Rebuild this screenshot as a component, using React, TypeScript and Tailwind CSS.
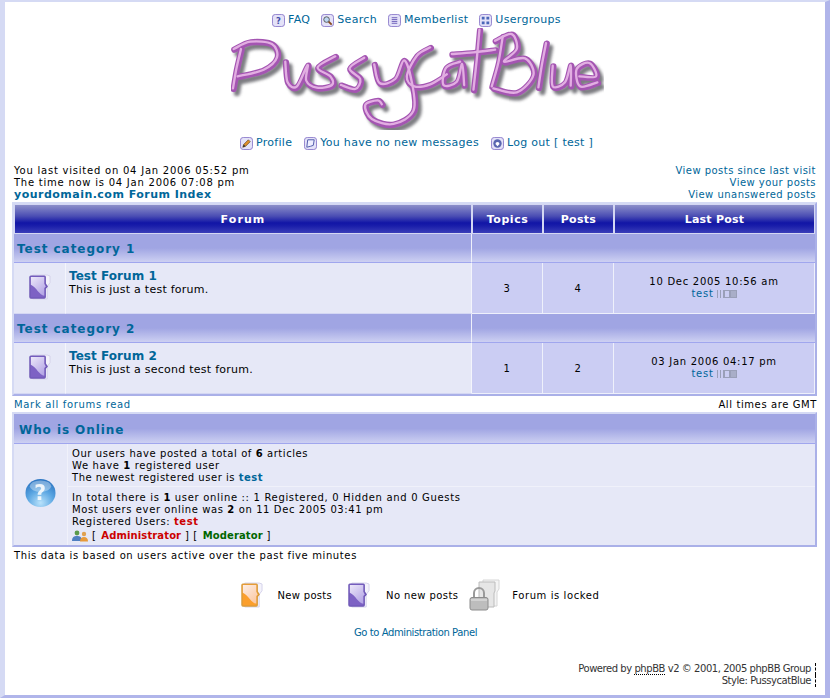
import type { ReactNode } from "react";

// smooth line through points, used for the hand written logo strokes
function smooth(pts: number[][]) {
  let d = `M${pts[0][0]} ${pts[0][1]}`;
  for (let i = 0; i < pts.length - 1; i++) {
    const p0 = pts[i - 1] || pts[i];
    const p1 = pts[i];
    const p2 = pts[i + 1];
    const p3 = pts[i + 2] || p2;
    const c1x = p1[0] + (p2[0] - p0[0]) / 6;
    const c1y = p1[1] + (p2[1] - p0[1]) / 6;
    const c2x = p2[0] - (p3[0] - p1[0]) / 6;
    const c2y = p2[1] - (p3[1] - p1[1]) / 6;
    d += ` C${c1x} ${c1y} ${c2x} ${c2y} ${p2[0]} ${p2[1]}`;
  }
  return d;
}

const logoStrokes = [
  [[48, 268], [58, 210], [72, 150]],
  [[50, 150], [100, 128], [165, 135], [180, 175], [140, 212], [62, 232]],
  [[205, 188], [212, 250], [240, 262], [272, 198], [268, 245], [300, 266], [345, 258], [340, 232], [302, 205], [355, 172]],
  [[372, 258], [415, 270], [430, 240], [398, 208], [442, 176]],
  [[472, 196], [488, 252], [535, 240], [562, 184], [585, 250], [590, 335], [530, 375], [465, 360], [445, 318], [482, 304], [495, 316]],
  [[640, 145], [600, 170], [570, 232], [592, 262], [640, 256], [690, 226]],
  [[730, 188], [688, 206], [680, 258], [720, 248], [736, 195], [742, 258]],
  [[788, 92], [780, 180], [770, 272]],
  [[705, 165], [770, 160], [835, 152]],
  [[858, 112], [845, 190], [825, 262]],
  [[835, 125], [885, 105], [900, 150], [862, 188], [925, 178], [950, 228], [900, 280], [830, 268]],
  [[988, 132], [975, 200], [965, 265]],
  [[1008, 200], [1008, 262], [1045, 250], [1062, 198], [1062, 260]],
  [[1088, 232], [1138, 232], [1118, 192], [1080, 210], [1090, 262], [1142, 250]],
].map(smooth);

function Logo() {
  return (
    <svg width="373" height="102" viewBox="40 85 1120 306" role="img" aria-label="PussycatBlue" className="block">
      <defs>
        <filter id="soft" x="-5%" y="-10%" width="110%" height="120%">
          <feGaussianBlur stdDeviation="5" />
        </filter>
        <filter id="shine" x="-5%" y="-10%" width="110%" height="120%">
          <feGaussianBlur stdDeviation="1.8" />
        </filter>
      </defs>
      <g fill="none" strokeLinecap="round" strokeLinejoin="round">
        <g stroke="#5c5c62" strokeWidth="19" transform="translate(10 12)" filter="url(#soft)" opacity="0.8">
          {logoStrokes.map((d, i) => <path key={i} d={d} />)}
        </g>
        <g stroke="#a455b2" strokeWidth="19">
          {logoStrokes.map((d, i) => <path key={i} d={d} />)}
        </g>
        <g stroke="#e2aee2" strokeWidth="7" transform="translate(-2 -2)" filter="url(#shine)">
          {logoStrokes.map((d, i) => <path key={i} d={d} />)}
        </g>
      </g>
    </svg>
  );
}

function NavIcon({ children }: { children: ReactNode }) {
  return (
    <svg width="13" height="13" viewBox="0 0 14 14" className="block shrink-0">
      <rect x="0.5" y="0.5" width="13" height="13" rx="3" fill="#e4e2f8" stroke="#8d7ccb" />
      {children}
    </svg>
  );
}

const navIcons: Record<string, ReactNode> = {
  faq: <text x="7" y="11" textAnchor="middle" fontSize="9" fontWeight="700" fill="#3f4fa8" fontFamily="DejaVu Sans">?</text>,
  search: (
    <>
      <path d="M8 8l3.5 3.5" stroke="#8a4a20" strokeWidth="2" />
      <circle cx="6" cy="6" r="3" fill="#bcd6f2" stroke="#555" />
    </>
  ),
  members: <path d="M4 4h6M4 6h6M4 8h6M4 10h6" stroke="#6a5cb8" />,
  groups: <path d="M3 3h3v3H3zM8 3h3v3H8zM3 8h3v3H3zM8 8h3v3H8z" fill="#4a66b8" />,
  profile: (
    <>
      <path d="M3 11l1-3 5-5 2 2-5 5z" fill="#e0912a" stroke="#5a3a1a" strokeWidth="0.7" />
      <path d="M3 11l1-3 2 2z" fill="#333" />
    </>
  ),
  messages: <path d="M4 3h7l-1 6-3 1-4 1z" fill="#eef" stroke="#4a55a8" />,
  logout: (
    <>
      <circle cx="7" cy="7" r="4.5" fill="#5a66b0" />
      <path d="M4.8 7.5a2.2 2.2 0 0 1 4.4 0L7 10z" fill="#fff" />
    </>
  ),
};

function NavLink({ icon, children }: { icon: string; children: ReactNode }) {
  return (
    <span className="flex items-center gap-[3px]">
      <NavIcon>{navIcons[icon]}</NavIcon>
      <span className="text-[#006699] whitespace-nowrap">{children}</span>
    </span>
  );
}

function Folder({ color = "purple", idSuffix = "a", className = "" }: { color?: string; idSuffix?: string; className?: string }) {
  const c =
    color === "orange"
      ? { edge: "#d59a3c", body: "#fb9f2c", top: "#fdeee6", bottom: "#fbc9a4" }
      : { edge: "#6d57b5", body: "#7d62c4", top: "#ece8f9", bottom: "#b5a6e6" };
  const id = `fold-${color}-${idSuffix}`;
  return (
    <svg width="23" height="27" viewBox="0 0 24 28" className={`block shrink-0 ${className}`}>
      <defs>
        <linearGradient id={id} x1="0" y1="0" x2="0.7" y2="1">
          <stop offset="0" stopColor={c.top} />
          <stop offset="1" stopColor={c.bottom} />
        </linearGradient>
      </defs>
      <path d="M5 1h15l3 1v7l-3 4v13H5z" fill="#f4f3fb" stroke="#d4d2ea" />
      <path d="M2 3q0-1 1-1h14q1 0 1 1v7l2 3-2 2v9q0 1-1 1H3q-1 0-1-1z" fill={c.body} stroke={c.edge} strokeWidth="1.3" />
      <path d="M3 3h14v7l1.500 3-1.500 1.500v8C12 22 9 14 3 11z" fill={`url(#${id})`} />
    </svg>
  );
}

function LockedFolder() {
  return (
    <svg width="32" height="32" viewBox="0 0 32 32" className="block shrink-0">
      <path d="M14 1h16v9l-2 3v14H14z" fill="#f4f4f4" stroke="#d6d6d6" />
      <path d="M10 3h16v9l-1 2v14H10z" fill="#e6e6e6" stroke="#bcbcbc" />
      <path d="M5 19v-5a5 5 0 0 1 10 0v5" fill="none" stroke="#9a9a9a" strokeWidth="2" />
      <rect x="1" y="18.5" width="18" height="12.5" rx="2" fill="#bdbdbd" stroke="#8c8c8c" />
      <path d="M2 21h16" stroke="#e8e8e8" />
    </svg>
  );
}

function QuestionBall() {
  return (
    <svg width="31" height="30" viewBox="0 0 32 30" className="block">
      <defs>
        <radialGradient id="ball" cx="0.5" cy="0.85" r="0.8">
          <stop offset="0" stopColor="#b9e2fb" />
          <stop offset="0.55" stopColor="#5ba6e2" />
          <stop offset="1" stopColor="#2f78c4" />
        </radialGradient>
      </defs>
      <ellipse cx="16" cy="15" rx="15.5" ry="14.5" fill="url(#ball)" />
      <ellipse cx="16" cy="8" rx="11" ry="6" fill="#fff" opacity="0.35" />
      <text x="16" y="22" textAnchor="middle" fontSize="21" fontWeight="700" fill="#fff" opacity="0.85" fontFamily="DejaVu Sans">?</text>
    </svg>
  );
}

function RankBars() {
  return (
    <svg width="20" height="8" viewBox="0 0 20 8" className="inline-block ml-[3px]">
      <path d="M0.5 0v8M3.500 0v8M6.500 0v8" stroke="#9a9fb8" />
      <rect x="7.5" y="0.5" width="5" height="7" fill="none" stroke="#9a9fb8" />
      <rect x="13.5" y="0.5" width="6" height="7" fill="#a9aec8" stroke="#9a9fb8" />
    </svg>
  );
}

const headCell =
  "h-[30px] p-0 pt-[2px] text-center align-middle font-bold text-white text-[11px] border border-[#d4d7f3] bg-[linear-gradient(#8c8fca_0%,#4a4db3_40%,#1115a6_64%,#1a1eaa_75%,#3a3eb9_100%)]";
const catCell =
  "h-[29px] p-0 pt-[2px] border-b border-b-[#a0a6ee] bg-[linear-gradient(#a0a5e3_0%,#a0a5e3_50%,#cdd0f2_100%)]";
const numCell = "bg-[#cbcdf3] text-center align-middle p-0 border-b border-b-[#eef0fb] border-r border-r-[#eef0fb]";

function ForumRows({ id, cat, name, desc, topics, posts, last }: { id: string; cat: string; name: string; desc: string; topics: number; posts: number; last: string }) {
  return (
    <>
      <tr>
        <td colSpan={2} className={`${catCell} border-r border-r-[#eef0fb]`}>
          <span className="pl-[3px] font-bold text-[12px] tracking-[0.95px] text-[#006699]">{cat}</span>
        </td>
        <td colSpan={3} className={catCell}></td>
      </tr>
      <tr>
        <td className="h-[51px] p-0 bg-[#e6e8f7] border-b border-b-[#d4d7f3] border-r border-r-[#f4f5fc]">
          <Folder className="mx-auto mb-[2px]" idSuffix={id} />
        </td>
        <td className="p-0 pl-[3px] align-top bg-[#e6e8f7] border-b border-b-[#d4d7f3] border-r border-r-[#f4f5fc]">
          <div className="mt-[7px] font-bold text-[12px] leading-[13px] tracking-[0.05px] text-[#006699]">{name}</div>
          <div className="text-[11px] leading-[14px] tracking-[0.25px] text-black">{desc}</div>
        </td>
        <td className={numCell}>{topics}</td>
        <td className={numCell}>{posts}</td>
        <td className={`${numCell} tracking-[0.72px]`}>
          <div className="leading-[12px]">{last}</div>
          <div className="leading-[12px] flex items-center justify-center">
            <span className="text-[#006699]">test</span>
            <RankBars />
          </div>
        </td>
      </tr>
    </>
  );
}

export default function App() {
  return (
    <div className="w-[830px] h-[698px] bg-white overflow-hidden text-black font-['DejaVu_Sans',Verdana,sans-serif] text-[10px] tracking-[0.62px] border-l-[5px] border-t-[2px] border-l-[#d5daf4] border-t-[#d5daf4] border-r-[5px] border-b-[3px] border-r-[#b0b5ea] border-b-[#b0b5ea]">
      <div className="pl-[7px] pr-[8px]">
        <div className="flex flex-col items-center">
          <div className="mt-[11px] ml-[4px] h-[14px] flex items-center gap-[11px] text-[11px] tracking-[0.3px]">
            <NavLink icon="faq">FAQ</NavLink>
            <NavLink icon="search">Search</NavLink>
            <NavLink icon="members">Memberlist</NavLink>
            <NavLink icon="groups">Usergroups</NavLink>
          </div>
          <div className="mt-[1px] ml-[6px]">
            <Logo />
          </div>
          <div className="mt-[6px] ml-[4px] h-[14px] flex items-center gap-[12px] text-[11px] tracking-[0.3px]">
            <NavLink icon="profile">Profile</NavLink>
            <NavLink icon="messages">You have no new messages</NavLink>
            <NavLink icon="logout">Log out [ test ]</NavLink>
          </div>
        </div>

        <div className="mt-[15px] flex justify-between pl-[2px] pr-[1px] leading-[12px]">
          <div>
            <div className="tracking-[0.77px]">You last visited on 04 Jan 2006 05:52 pm</div>
            <div className="tracking-[0.76px]">The time now is 04 Jan 2006 07:08 pm</div>
            <div className="font-bold text-[11px] tracking-[0.48px] text-[#006699]">yourdomain.com Forum Index</div>
          </div>
          <div className="text-right text-[#006699] tracking-[0.47px]">
            <div>View posts since last visit</div>
            <div>View your posts</div>
            <div>View unanswered posts</div>
          </div>
        </div>

        <table className="mt-[1px] w-[805px] table-fixed border-separate border-spacing-0 border-2 border-t-[#d5daf4] border-l-[#d5daf4] border-r-[#aab0e8] border-b-[#aab0e8]">
          <colgroup>
            <col className="w-[52px]" />
            <col />
            <col className="w-[71px]" />
            <col className="w-[71px]" />
            <col className="w-[201px]" />
          </colgroup>
          <tbody>
            <tr>
              <th colSpan={2} className={`${headCell} tracking-[1.1px]`}>Forum</th>
              <th className={`${headCell} tracking-[0.55px]`}>Topics</th>
              <th className={`${headCell} tracking-[0.3px]`}>Posts</th>
              <th className={`${headCell} tracking-[0.25px]`}>Last Post</th>
            </tr>
            <ForumRows id="f1" cat="Test category 1" name="Test Forum 1" desc="This is just a test forum." topics={3} posts={4} last="10 Dec 2005 10:56 am" />
            <ForumRows id="f2" cat="Test category 2" name="Test Forum 2" desc="This is just a second test forum." topics={1} posts={2} last="03 Jan 2006 04:17 pm" />
          </tbody>
        </table>

        <div className="flex justify-between h-[16px] items-center pl-[2px] text-[#006699]">
          <span className="tracking-[0.67px]">Mark all forums read</span>
          <span className="text-black tracking-[0.6px]">All times are GMT</span>
        </div>

        <table className="w-[805px] table-fixed border-separate border-spacing-0 border-2 border-t-[#d5daf4] border-l-[#d5daf4] border-r-[#aab0e8] border-b-[#aab0e8]">
          <colgroup>
            <col className="w-[54px]" />
            <col />
          </colgroup>
          <tbody>
            <tr>
              <td colSpan={2} className="h-[30px] p-0 pl-[5px] pt-[2px] bg-[linear-gradient(#a0a5e3_0%,#a0a5e3_50%,#cdd0f2_100%)] border-b border-b-[#a0a6ee]">
                <span className="font-bold text-[12px] tracking-[0.92px] text-[#006699]">Who is Online</span>
              </td>
            </tr>
            <tr>
              <td rowSpan={2} className="p-0 bg-[#e6e8f7] border-r border-r-[#f0f1fa]">
                <div className="flex justify-center mb-[3px]"><QuestionBall /></div>
              </td>
              <td className="h-[43px] p-0 pl-[4px] pt-[2px] bg-[#e6e8f7] border-b border-b-[#f0f1fa] leading-[12px]">
                <div className="tracking-[0.57px]">Our users have posted a total of <b>6</b> articles</div>
                <div>We have <b>1</b> registered user</div>
                <div className="tracking-[0.52px]">The newest registered user is <b className="text-[#006699]">test</b></div>
              </td>
            </tr>
            <tr>
              <td className="h-[58px] p-0 pl-[4px] pt-[5px] align-top bg-[#e6e8f7] leading-[12px]">
                <div className="tracking-[0.67px]">In total there is <b>1</b> user online :: 1 Registered, 0 Hidden and 0 Guests</div>
                <div className="tracking-[0.6px]">Most users ever online was <b>2</b> on 11 Dec 2005 03:41 pm</div>
                <div className="tracking-[0.6px]">Registered Users: <b className="text-[#cc0000]">test</b></div>
                <div className="flex items-center h-[14px] mt-[1px]">
                  <svg width="16" height="12" viewBox="0 0 16 12" className="block mr-[4px]">
                    <circle cx="5" cy="3" r="2.4" fill="#5a9a4a" />
                    <path d="M0 11c0-4 2-5 5-5s5 1 5 5z" fill="#4f7fc0" />
                    <circle cx="12" cy="4" r="2.2" fill="#e0a050" />
                    <path d="M8 11.500c0-3 1.500-4.500 4-4.500s4 1.500 4 4.500z" fill="#e89a3a" />
                  </svg>
                  <span>[&nbsp;<b className="text-[#cc0000] pl-[1px] tracking-[0.12px]">Administrator</b>&nbsp;] [&nbsp;<b className="text-[#006600] pl-[1px] tracking-[0.12px]">Moderator</b>&nbsp;]</span>
                </div>
              </td>
            </tr>
          </tbody>
        </table>

        <div className="mt-[3px] pl-[2px] leading-[12px]">This data is based on users active over the past five minutes</div>

        <div className="mt-[17px] ml-[10px] h-[32px] flex items-center justify-center">
          <Folder color="orange" idSuffix="legend" />
          <span className="ml-[15px] mr-[15px] tracking-[0.3px]">New posts</span>
          <Folder idSuffix="legend" />
          <span className="ml-[16px] mr-[11px] tracking-[0.4px]">No new posts</span>
          <LockedFolder />
          <span className="ml-[11px] tracking-[0.58px]">Forum is locked</span>
        </div>

        <div className="mt-[14px] ml-[2px] text-center tracking-[-0.4px] text-[#006699]">Go to Administration Panel</div>

        <div className="mt-[23px] pr-[1px] text-right tracking-[-0.45px] leading-[12px] text-[#333]">
          <div className="pr-[4px] border-r border-dashed border-r-black">
            Powered by <span className="border-b border-dotted border-b-black">phpBB</span> v2 © 2001, 2005 phpBB Group
          </div>
          <div className="pr-[4px] border-r border-dashed border-r-black">Style: PussycatBlue</div>
        </div>
      </div>
    </div>
  );
}
